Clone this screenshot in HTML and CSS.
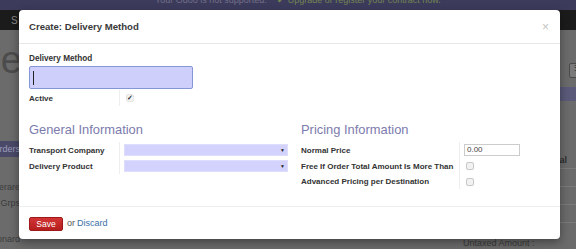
FILE: index.html
```html
<!DOCTYPE html>
<html lang="en">
<head>
  <meta charset="UTF-8">
  <title>Create: Delivery Method</title>
  <link rel="stylesheet" href="styles.css">
</head>

<body>
  <div class="topbar">
    <span class="notice">Your Odoo is not supported.</span>
    <span class="upgrade">&#10004; Upgrade or register your contract now.</span>
  </div>

  <div class="navbar">
    <span class="nav-item">S</span>
  </div>

  <div class="page">
    <div class="sidebar">
      <div class="logo"><span>ode</span></div>
      <div class="menu-item active"><span>Orders</span></div>
      <div class="menu-item"><span>Operare</span></div>
      <div class="menu-item"><span>Grps</span></div>
      <div class="menu-item last"><span>Leonard</span></div>
    </div>

    <div class="main">
      <div class="toolbar"><span class="tool-btn">&#9776;</span></div>
      <div class="band"></div>
      <div class="rows">
        <div class="row-line"><span class="total">Total</span></div>
        <div class="row-line"></div>
        <div class="row-line"></div>
        <div class="row-line"></div>
      </div>
      <div class="untaxed">Untaxed Amount :</div>
    </div>
  </div>

  <!-- modal lies over the dimmed page -->
  <div class="modal">
    <div class="modal-header">
      <span class="modal-title">Create: Delivery Method</span>
      <span class="close">&times;</span>
    </div>

    <div class="modal-body">
      <div class="field-label">Delivery Method</div>
      <div class="name-input"><span class="caret"></span></div>

      <div class="row">
        <div class="cell-label">Active</div>
        <div class="cell-field"><span class="checkbox checked">&#10003;</span></div>
      </div>

      <div class="groups">
        <div class="group left">
          <h2>General Information</h2>
          <div class="row">
            <div class="cell-label">Transport Company</div>
            <div class="cell-field"><div class="select"><span class="arrow">&#9660;</span></div></div>
          </div>
          <div class="row">
            <div class="cell-label">Delivery Product</div>
            <div class="cell-field"><div class="select"><span class="arrow">&#9660;</span></div></div>
          </div>
        </div>

        <div class="group right">
          <h2>Pricing Information</h2>
          <div class="row">
            <div class="cell-label">Normal Price</div>
            <div class="cell-field"><div class="price">0.00</div></div>
          </div>
          <div class="row">
            <div class="cell-label">Free If Order Total Amount Is More Than</div>
            <div class="cell-field"><span class="checkbox"></span></div>
          </div>
          <div class="row short">
            <div class="cell-label">Advanced Pricing per Destination</div>
            <div class="cell-field"><span class="checkbox"></span></div>
          </div>
        </div>
      </div>
    </div>

    <div class="modal-footer">
      <button class="save">Save</button>
      <span class="or">or</span>
      <a class="discard" href="#">Discard</a>
    </div>
  </div>
</body>
</html>
```

FILE: styles.css
```css
body {
  margin: 0;
  width: 576px;
  height: 249px;
  overflow: hidden;
  position: relative;
  font-family: "Liberation Sans", Arial, sans-serif;
  background-color: #6b6b6b;
}

/* dimmed page behind the dialog */

.topbar {
  height: 10px;
  background-color: #3d3b5c;
  font-size: 9px;
  line-height: 1px;
  white-space: nowrap;
  overflow: hidden;
  padding-left: 155px;
}

.notice {
  color: #716f88;
}

.upgrade {
  color: #718352;
  margin-left: 8px;
}

.navbar {
  height: 20px;
  background-color: #1b1b1b;
  display: flex;
  align-items: center;
  padding-left: 11px;
}

.nav-item {
  color: #8a8a8a;
  font-size: 10px;
}

.page {
  display: flex;
  height: 219px;
}

.sidebar {
  width: 20px;
  flex-shrink: 0;
  display: flex;
  flex-direction: column;
  overflow: hidden;
}

.sidebar > div {
  display: flex;
  justify-content: flex-end;
  white-space: nowrap;
}

.logo {
  height: 52px;
  align-items: center;
  font-size: 38px;
  color: #4c4c4c;
  margin-top: 4px;
  margin-right: -2px;
}

.menu-item {
  font-size: 9px;
  color: #3c3c3c;
  height: 16px;
  align-items: center;
}

.menu-item.active {
  background-color: #4a4968;
  color: #9d9cba;
  margin-top: 55px;
  margin-bottom: 22px;
}

.menu-item.last {
  margin-top: 20px;
}

.main {
  flex: 1;
  display: flex;
  flex-direction: column;
  padding-top: 33px;
}

.toolbar {
  height: 15px;
  display: flex;
  justify-content: flex-end;
}

.tool-btn {
  width: 14px;
  margin-right: -9px;
  border: 1px solid #4a4a4a;
  border-radius: 2px;
  background-color: #7a7a7a;
  font-size: 8px;
  color: #333;
  text-align: center;
}

.band {
  height: 14px;
  margin-top: 9px;
  background-color: #5b5a7a;
}

.rows {
  margin-top: 50px;
}

.row-line {
  height: 17px;
  border-bottom: 1px solid #7b7b7b;
  display: flex;
  justify-content: flex-end;
  align-items: center;
}

.total {
  font-size: 9px;
  font-weight: bold;
  color: #2e2e2e;
  margin-right: 9px;
}

.untaxed {
  margin-top: auto;
  padding-left: 443px;
  padding-bottom: 1px;
  font-size: 9px;
  color: #3a3a3a;
}

/* dialog */

.modal {
  position: absolute;
  left: 19px;
  top: 10px;
  width: 541px;
  height: 229px;
  background-color: #ffffff;
  border-radius: 4px;
  box-shadow: 0 3px 10px rgba(0, 0, 0, 0.4);
  display: flex;
  flex-direction: column;
  color: #333333;
}

.modal-header {
  height: 33px;
  border-bottom: 1px solid #e8e8e8;
  display: flex;
  align-items: center;
  justify-content: space-between;
  padding: 0 10px;
}

.modal-title {
  font-size: 9.6px;
  font-weight: bold;
  color: #3a3a3a;
}

.close {
  font-size: 12px;
  color: #c4c4c4;
  margin-right: 1px;
}

.modal-body {
  flex: 1;
  padding: 9px 10px 0 10px;
}

.field-label {
  font-size: 8.2px;
  font-weight: bold;
  line-height: 12px;
}

.name-input {
  margin-top: 1px;
  width: 162px;
  height: 21px;
  background-color: #cfcffc;
  border: 1px solid #8596d6;
  border-radius: 2px;
  display: flex;
  align-items: center;
}

.caret {
  width: 1px;
  height: 14px;
  margin-left: 3px;
  background-color: #222;
}

.row {
  display: flex;
  height: 16px;
  align-items: center;
}

.row.short {
  height: 15px;
}

.modal-body > .row {
  margin-top: 1px;
}

.cell-label {
  font-size: 8px;
  font-weight: bold;
  white-space: nowrap;
  height: 100%;
  display: flex;
  align-items: center;
  border-right: 1px solid #eeeeee;
  box-sizing: border-box;
}

.cell-field {
  padding-left: 4px;
  display: flex;
  align-items: center;
}

.left .cell-label,
.modal-body > .row .cell-label {
  width: 91px;
}

.right .cell-label {
  width: 159px;
}

.checkbox {
  width: 6px;
  height: 6px;
  border: 1px solid #c8c8c8;
  border-radius: 2px;
  background-color: #f2f2f2;
  margin-left: 2px;
  font-size: 7px;
  line-height: 6px;
  text-align: center;
  color: #333;
}

.checkbox.checked {
  border-color: #e6e6e6;
  font-weight: bold;
}

.groups {
  display: grid;
  grid-template-columns: 260px 1fr;
  gap: 12px;
  margin-top: 16px;
}

h2 {
  margin: 0 0 4px 0;
  font-size: 12.9px;
  font-weight: normal;
  line-height: 16px;
  color: #7c7bad;
}

.select {
  width: 164px;
  height: 12px;
  background-color: #d2d2fc;
  border: 1px solid #dedefc;
  box-sizing: border-box;
  display: flex;
  justify-content: flex-end;
  align-items: center;
}

.arrow {
  font-size: 5px;
  color: #222;
  margin-right: 2px;
}

.price {
  width: 56px;
  height: 12px;
  border: 1px solid #cccccc;
  box-sizing: border-box;
  font-size: 8px;
  line-height: 10px;
  padding-left: 2px;
  color: #444;
}

.modal-footer {
  height: 32px;
  border-top: 1px solid #eeeeee;
  display: flex;
  align-items: center;
  padding: 0 10px;
  font-size: 9px;
}

.save {
  width: 34px;
  height: 14px;
  padding: 0;
  border: 1px solid #9e1a1a;
  border-radius: 2px;
  background: linear-gradient(#d23434, #b61e1e);
  color: #ffffff;
  font-family: "Liberation Sans", Arial, sans-serif;
  font-size: 8.5px;
  margin-top: 1px;
}

.or {
  color: #555555;
  margin-left: 4px;
}

.discard {
  color: #3b6fa8;
  text-decoration: none;
  margin-left: 2px;
}
```
